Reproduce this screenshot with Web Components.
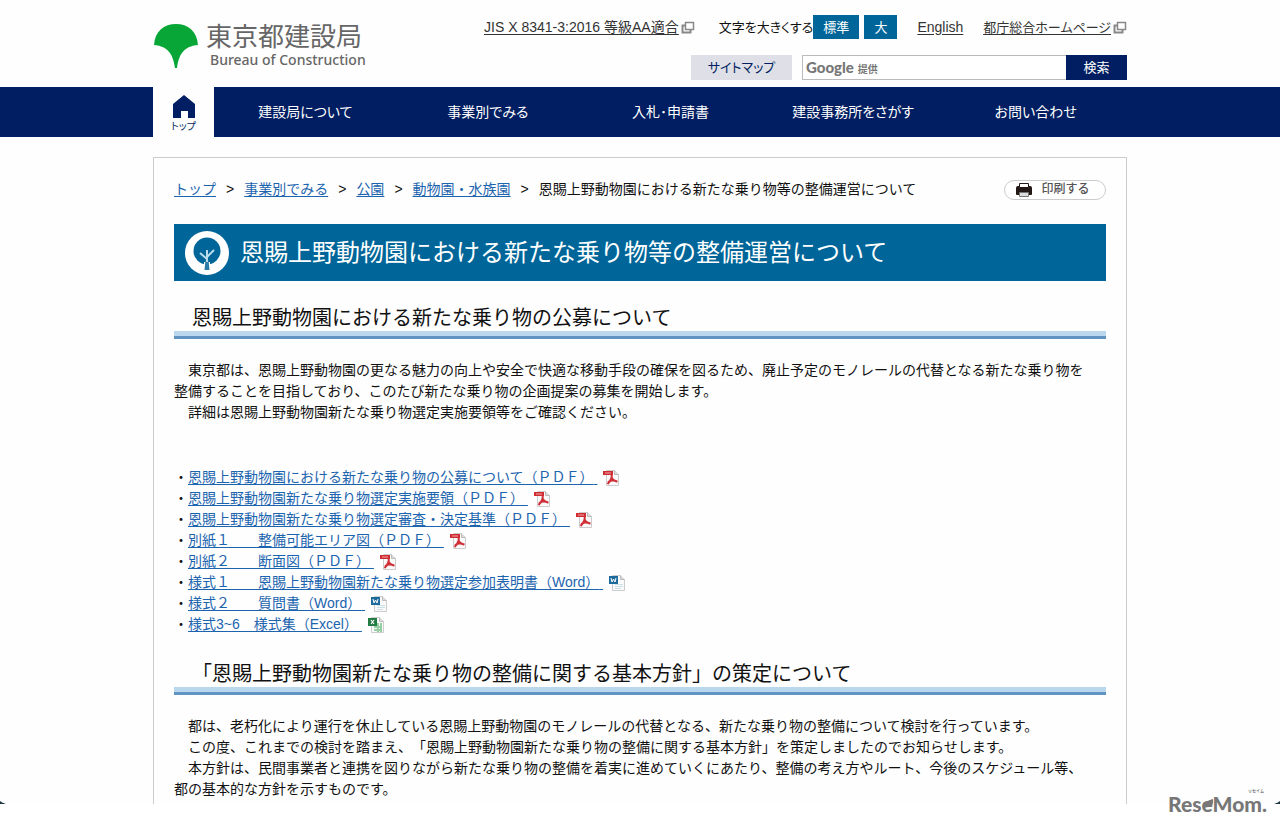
<!DOCTYPE html>
<html lang="ja">
<head>
<meta charset="utf-8">
<meta name="viewport" content="width=device-width, initial-scale=1">
<title>恩賜上野動物園における新たな乗り物等の整備運営について | 東京都建設局</title>
<style>
    html { background: #fff; }
    body {
        margin: 0;
        min-height: 100vh;
        display: flex;
        flex-direction: column;
        color: #111;
        font-family: "Liberation Sans", "Noto Sans CJK JP", sans-serif;
        font-size: 14px;
        line-height: 21px;
        text-spacing-trim: space-all;
        --navy: #001e61;
        --teal: #006699;
        --link: #1c64ae;
        --wrap: 974px;
    }
    p { margin: 21px 0 0; }
</style>
</head>
<body>
    <site-header></site-header>
    <global-nav></global-nav>
    <page-frame>
        <bread-crumbs slot="top"></bread-crumbs>
        <page-title>恩賜上野動物園における新たな乗り物等の整備運営について</page-title>
        <section-heading>恩賜上野動物園における新たな乗り物の公募について</section-heading>
        <p>　東京都は、恩賜上野動物園の更なる魅力の向上や安全で快適な移動手段の確保を図るため、廃止予定のモノレールの代替となる新たな乗り物を<br>整備することを目指しており、このたび新たな乗り物の企画提案の募集を開始します。<br>　詳細は恩賜上野動物園新たな乗り物選定実施要領等をご確認ください。</p>
        <file-list>
            <file-item type="pdf">恩賜上野動物園における新たな乗り物の公募について（ＰＤＦ）</file-item>
            <file-item type="pdf">恩賜上野動物園新たな乗り物選定実施要領（ＰＤＦ）</file-item>
            <file-item type="pdf">恩賜上野動物園新たな乗り物選定審査・決定基準（ＰＤＦ）</file-item>
            <file-item type="pdf">別紙１　　整備可能エリア図（ＰＤＦ）</file-item>
            <file-item type="pdf">別紙２　　断面図（ＰＤＦ）</file-item>
            <file-item type="word">様式１　　恩賜上野動物園新たな乗り物選定参加表明書（Word）</file-item>
            <file-item type="word">様式２　　質問書（Word）</file-item>
            <file-item type="excel">様式3~6　様式集（Excel）</file-item>
        </file-list>
        <section-heading>「恩賜上野動物園新たな乗り物の整備に関する基本方針」の策定について</section-heading>
        <p>　都は、老朽化により運行を休止している恩賜上野動物園のモノレールの代替となる、新たな乗り物の整備について検討を行っています。<br>　この度、これまでの検討を踏まえ、「恩賜上野動物園新たな乗り物の整備に関する基本方針」を策定しましたのでお知らせします。<br>　本方針は、民間事業者と連携を図りながら新たな乗り物の整備を着実に進めていくにあたり、整備の考え方やルート、今後のスケジュール等、<br>都の基本的な方針を示すものです。</p>
    </page-frame>
    <credit-bar></credit-bar>

<script>
const windowIcon = `
    <svg width="14" height="13" viewBox="0 0 14 13" fill="none" stroke="#888" aria-hidden="true">
        <path d="M4 4.5H1.5v7h8V9" stroke-width="2"/>
        <rect x="4.5" y="1.5" width="8" height="7" fill="#fff" stroke-width="1.5"/>
    </svg>`;

class SiteHeader extends HTMLElement {
    connectedCallback() {
        this.attachShadow({ mode: 'open' });
        this.shadowRoot.innerHTML = `
            <style>
                :host {
                    display: block;
                    background: #fefefe;
                }
                header {
                    display: flex;
                    justify-content: space-between;
                    max-width: var(--wrap);
                    margin: 0 auto;
                    padding: 15px 0 8px;
                    font-feature-settings: "palt";
                }
                .logo {
                    display: flex;
                    gap: 7px;
                    padding-top: 8px;
                    color: #666;
                    text-decoration: none;
                }
                .logo strong, .logo span { display: block; }
                .logo strong {
                    font-size: 26px;
                    line-height: 28px;
                    font-weight: 400;
                    font-feature-settings: normal;
                }
                .logo span {
                    padding-left: 4px;
                    font: 500 14px/17px "Noto Sans", sans-serif;
                }
                .tools {
                    display: flex;
                    flex-direction: column;
                    align-items: flex-end;
                    gap: 16px;
                }
                .row {
                    display: flex;
                    align-items: center;
                    height: 24px;
                }
                .links { gap: 20px; }
                .links a {
                    color: #333;
                    text-underline-offset: 2px;
                }
                .links a.blank {
                    display: flex;
                    align-items: center;
                    gap: 2px;
                }
                .links a.metro { font-size: 13px; }
                .size {
                    display: flex;
                    align-items: center;
                    padding-left: 4px;
                    font-size: 13px;
                }
                .size button + button { margin-left: 5px; }
                button {
                    height: 24px;
                    padding: 0 10px;
                    border: 0;
                    border-radius: 0;
                    background: var(--teal);
                    color: #fff;
                    font: inherit;
                    font-size: 13px;
                }
                .sitemap {
                    width: 101px;
                    margin-right: 10px;
                    background: #dfe0e7;
                    color: var(--navy);
                    line-height: 25px;
                    text-align: center;
                    text-decoration: none;
                    font-size: 13px;
                }
                form {
                    display: flex;
                    position: relative;
                    margin: 0;
                }
                input {
                    box-sizing: border-box;
                    width: 264px;
                    height: 25px;
                    border: 1px solid #bbb;
                    border-right: 0;
                    background: #fff;
                    font: inherit;
                }
                label {
                    position: absolute;
                    left: 4px;
                    top: 2px;
                    color: #777;
                    font-size: 10px;
                    font-weight: 700;
                    line-height: 20px;
                }
                label b {
                    margin-right: 4px;
                    font-family: Lato, sans-serif;
                    font-size: 15px;
                }
                form button {
                    width: 61px;
                    height: 25px;
                    background: var(--navy);
                }
            </style>
            <header>
                <a class="logo" href="#">
                    <svg width="46" height="46" viewBox="0 0 46 46" aria-hidden="true">
                        <path fill="#08a637" d="M1 22C2 8 11 1 23 1s21 7 22 21c-11 1-19 6-21 23h-2C20 28 12 23 1 22z"/>
                    </svg>
                    <div><strong>東京都建設局</strong><span>Bureau of Construction</span></div>
                </a>
                <div class="tools">
                    <div class="row links">
                        <a class="blank" href="#"><u>JIS X 8341-3:2016 等級AA適合</u>${windowIcon}</a>
                        <div class="size">文字を大きくする<button type="button">標準</button><button type="button">大</button></div>
                        <a href="#">English</a>
                        <a class="blank metro" href="#"><u>都庁総合ホームページ</u>${windowIcon}</a>
                    </div>
                    <div class="row">
                        <a class="sitemap" href="#">サイトマップ</a>
                        <form role="search">
                            <input id="q" type="text">
                            <label for="q"><b>Google</b>提供</label>
                            <button type="button">検索</button>
                        </form>
                    </div>
                </div>
            </header>
        `;
    }
}

class GlobalNav extends HTMLElement {
    connectedCallback() {
        const items = ['建設局について', '事業別でみる', '入札･申請書', '建設事務所をさがす', 'お問い合わせ'];
        this.attachShadow({ mode: 'open' });
        this.shadowRoot.innerHTML = `
            <style>
                :host {
                    display: block;
                    background: var(--navy);
                    font-feature-settings: "palt";
                }
                nav {
                    display: grid;
                    grid-template-columns: 61px repeat(5, 1fr);
                    max-width: var(--wrap);
                    height: 50px;
                    margin: 0 auto;
                }
                a {
                    display: flex;
                    align-items: center;
                    justify-content: center;
                    color: #fff;
                    text-decoration: none;
                }
                .home {
                    flex-direction: column;
                    gap: 2px;
                    padding-top: 5px;
                    background: #fefefe;
                    color: var(--navy);
                    font-size: 10px;
                    line-height: 14px;
                }
            </style>
            <nav>
                <a class="home" href="#">
                    <svg width="22" height="23" viewBox="0 0 22 23" aria-hidden="true">
                        <path fill="#001e61" d="M11 0l11 9v14h-7v-7H8v7H0V9z"/>
                    </svg>
                    トップ
                </a>
                ${items.map((text) => `<a href="#">${text}</a>`).join('')}
            </nav>
        `;
    }
}

class PageFrame extends HTMLElement {
    connectedCallback() {
        this.attachShadow({ mode: 'open' });
        this.shadowRoot.innerHTML = `
            <style>
                :host {
                    flex: 1;
                    display: flex;
                    padding-top: 20px;
                    background: #fefefe;
                }
                main {
                    box-sizing: border-box;
                    width: 100%;
                    max-width: var(--wrap);
                    margin: 0 auto;
                    padding: 21px 20px 0;
                    border: 1px solid #ccc;
                    border-bottom: 0;
                }
            </style>
            <main>
                <slot name="top"></slot>
                <slot></slot>
            </main>
        `;
    }
}

class BreadCrumbs extends HTMLElement {
    connectedCallback() {
        const parents = ['トップ', '事業別でみる', '公園', '動物園・水族園'];
        this.attachShadow({ mode: 'open' });
        this.shadowRoot.innerHTML = `
            <style>
                :host {
                    display: flex;
                    justify-content: space-between;
                    align-items: center;
                }
                nav {
                    display: flex;
                    gap: 10px;
                }
                a {
                    color: var(--link);
                    text-underline-offset: 2px;
                }
                button {
                    display: flex;
                    align-items: center;
                    justify-content: center;
                    gap: 9px;
                    width: 102px;
                    height: 20px;
                    padding: 0 4px 0 0;
                    border: 1px solid #ccc;
                    border-radius: 10px;
                    background: #fff;
                    color: #555;
                    font: inherit;
                    font-size: 12px;
                    font-weight: 500;
                }
            </style>
            <nav>
                ${parents.map((text) => `<a href="#">${text}</a><span>&gt;</span>`).join('')}
                <span>恩賜上野動物園における新たな乗り物等の整備運営について</span>
            </nav>
            <button type="button">
                <svg width="16" height="14" viewBox="0 0 16 14" aria-hidden="true">
                    <path fill="#231815" d="M2 3h12q2 0 2 2v6q0 1-1 1H1q-1 0-1-1V5q0-2 2-2z"/>
                    <path fill="#fff" stroke="#231815" d="M3.500 4.500v-4h9v4z"/>
                    <path fill="#ddd" stroke="#777" d="M3.500 9.500h9v4h-9z"/>
                </svg>
                印刷する
            </button>
        `;
    }
}

class PageTitle extends HTMLElement {
    connectedCallback() {
        this.attachShadow({ mode: 'open' });
        this.shadowRoot.innerHTML = `
            <style>
                :host {
                    display: block;
                    margin-top: 24px;
                }
                h1 {
                    display: flex;
                    align-items: center;
                    gap: 11px;
                    margin: 0;
                    padding: 6px 11px;
                    background: var(--teal);
                    color: #fff;
                    font-size: 24px;
                    line-height: 45px;
                    font-weight: 400;
                }
            </style>
            <h1>
                <svg width="44" height="44" viewBox="0 0 44 44" aria-hidden="true">
                    <circle cx="22" cy="22" r="22" fill="#fff"/>
                    <circle cx="22" cy="20" r="13.500" fill="#006699"/>
                    <path fill="#fff" d="M19 31h6v8h-6z"/>
                    <path fill="#2b7ba6" d="M20.500 29h3l1 10h-5z"/>
                    <path fill="none" stroke="#b8dcec" stroke-width="2" d="M22 31V19M22 28l-7-6M22 26l7-7"/>
                </svg>
                <slot></slot>
            </h1>
        `;
    }
}

class SectionHeading extends HTMLElement {
    connectedCallback() {
        this.attachShadow({ mode: 'open' });
        this.shadowRoot.innerHTML = `
            <style>
                :host {
                    display: block;
                    margin-top: 24px;
                    border-bottom: 3px solid #5f94c3;
                }
                h2 {
                    margin: 0;
                    padding-left: 18px;
                    border-bottom: 5px solid #b9d7ed;
                    font-size: 20px;
                    line-height: 26px;
                    font-weight: 400;
                }
            </style>
            <h2><slot></slot></h2>
        `;
    }
}

class FileList extends HTMLElement {
    connectedCallback() {
        this.attachShadow({ mode: 'open' });
        this.shadowRoot.innerHTML = `
            <style>
                :host {
                    display: block;
                    margin: 44px 0 26px;
                }
            </style>
            <div role="list"><slot></slot></div>
        `;
    }
}

class FileItem extends HTMLElement {
    connectedCallback() {
        const sheet = '<path fill="#fafafa" stroke="#ccc" d="M3.500.500h8l4 4v11h-12z"/><path fill="#ddd" stroke="#bbb" d="M11.500.500v4h4"/>';
        const marks = {
            pdf: `<path fill="#d12b32" d="M0 1h10v4H0z"/>
                <path stroke="#fff" stroke-opacity=".6" d="M2 3h6"/>
                <path fill="none" stroke="#cf3038" stroke-width="2" d="M8.500 4c1 3 0 6-4 10M8.500 7c1 3 3 4 6 4.500M5 12c3-2 6-2 9-.500"/>`,
            word: `<path stroke="#cbdfe9" d="M6 9.500h8M6 11.500h8M6 13.500h6"/>
                <path fill="#1d6a9d" d="M0 1h9v8H0z"/>
                <path fill="none" stroke="#fff" d="M2 3l1 4 1.500-3L6 7l1-4"/>`,
            excel: `<path stroke="#94cda0" stroke-width="2" d="M6 10h8M6 13h8M10 6v9M13 6v9"/>
                <path fill="#237b43" d="M0 1h9v8H0z"/>
                <path stroke="#fff" stroke-width="1.200" d="M3 3l3 4M6 3L3 7"/>`
        };
        this.setAttribute('role', 'listitem');
        this.attachShadow({ mode: 'open' });
        this.shadowRoot.innerHTML = `
            <style>
                :host {
                    display: flex;
                    align-items: center;
                }
                a {
                    color: var(--link);
                    text-underline-offset: 2px;
                }
                svg { margin-left: 6px; }
            </style>
            ・<a href="#"><slot></slot>&nbsp;</a>
            <svg width="16" height="16" viewBox="0 0 16 16" aria-hidden="true">${sheet}${marks[this.getAttribute('type')]}</svg>
        `;
    }
}

class CreditBar extends HTMLElement {
    connectedCallback() {
        this.attachShadow({ mode: 'open' });
        this.shadowRoot.innerHTML = `
            <style>
                :host {
                    display: block;
                    position: relative;
                    height: 23px;
                    background: #fff;
                }
                .brand {
                    position: absolute;
                    right: 13px;
                    bottom: 11px;
                    color: #777;
                    font: 900 21px/24px Lato, sans-serif;
                }
                small {
                    position: absolute;
                    right: 3px;
                    top: -3px;
                    font: 700 4px/4px "Noto Sans CJK JP", sans-serif;
                }
                .leaf {
                    position: absolute;
                    left: 36px;
                    top: 7px;
                }
                .corner {
                    position: absolute;
                    bottom: 100%;
                    left: 0;
                }
                .corner.end {
                    left: auto;
                    right: 0;
                }
            </style>
            <svg class="corner" width="6" height="3" viewBox="0 0 6 3" aria-hidden="true"><path fill="#1d3340" d="M0 0q2 2 6 3H0z"/></svg>
            <svg class="corner end" width="6" height="3" viewBox="0 0 6 3" aria-hidden="true"><path fill="#1d3340" d="M6 0Q4 2 0 3h6z"/></svg>
            <div class="brand">
                ReseMom.<small>リセイム</small>
                <svg class="leaf" width="10" height="9" viewBox="0 0 10 9" aria-hidden="true"><path fill="#777" d="M0 9Q0 2 9 0q1 7-4 8-2 0-5 1z"/></svg>
            </div>
        `;
    }
}

customElements.define('site-header', SiteHeader);
customElements.define('global-nav', GlobalNav);
customElements.define('page-frame', PageFrame);
customElements.define('bread-crumbs', BreadCrumbs);
customElements.define('page-title', PageTitle);
customElements.define('section-heading', SectionHeading);
customElements.define('file-list', FileList);
customElements.define('file-item', FileItem);
customElements.define('credit-bar', CreditBar);
</script>
</body>
</html>
